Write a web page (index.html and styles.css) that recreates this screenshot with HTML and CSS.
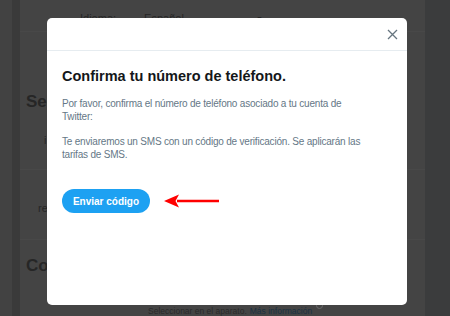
FILE: index.html
```html
<!DOCTYPE html>
<html lang="es">
<head>
  <meta charset="UTF-8" />
  <title>Twitter — Confirma tu número</title>
  <link rel="stylesheet" href="styles.css">
</head>
<body>
<div class="page">
  <div class="gutter"></div>
  <div class="settings">
    <div class="row lang-row">
      <span class="label">Idioma:</span>
      <span class="value">Español</span>
      <span class="caret">▼</span>
    </div>
    <div class="section-title">Seg</div>
    <div class="row small">i</div>
    <div class="row small re">re</div>
    <div class="section-title con">Con</div>
    <div class="row foot">Seleccionar en el aparato. <span class="more">Más información</span><span class="pin"></span></div>
  </div>
  <div class="side"></div>
</div>

<!-- === MODAL === -->
<div class="overlay">
  <div class="modal">
    <div class="modal-header">
      <button class="close-btn" aria-label="Cerrar">
        <svg width="11" height="11" viewBox="0 0 11 11">
          <path d="M1 1 L10 10 M10 1 L1 10" stroke="#66757f" stroke-width="1.3" fill="none"/>
        </svg>
      </button>
    </div>
    <div class="modal-body">
      <h2 class="modal-title">Confirma tu número de teléfono.</h2>
      <p>Por favor, confirma el número de teléfono asociado a tu cuenta de Twitter:</p>
      <p>Te enviaremos un SMS con un código de verificación. Se aplicarán las tarifas de SMS.</p>
      <div class="actions">
        <button class="send-btn">Enviar código</button>
        <svg class="arrow" width="58" height="16" viewBox="0 0 58 16">
          <path d="M14 8 H56" stroke="#f00" stroke-width="2.4"/>
          <path d="M1 8 L16 1.5 L12.5 8 L16 14.5 Z" fill="#f00"/>
        </svg>
      </div>
    </div>
  </div>
</div>
</body>
</html>
```

FILE: styles.css
```css
* {
  box-sizing: border-box;
}

body {
  margin: 0;
  width: 450px;
  height: 316px;
  overflow: hidden;
  font-family: 'Liberation Sans', Arial, sans-serif;
  background-color: #414141;
}

/* ===== Dimmed page behind ===== */
.page {
  display: flex;
  height: 316px;
}

.gutter {
  width: 20px;
  background: linear-gradient(to right, #424242 0 12px, #3a3a3a 12px 20px);
}

.settings {
  width: 405px;
  background-color: #444444;
  color: #262626;
  font-size: 11px;
  display: flex;
  flex-direction: column;
}

.side {
  flex-grow: 1;
  background-color: #3b3c3d;
}

.row {
  border-bottom: 1px solid #484848;
}

.lang-row {
  display: flex;
  align-items: center;
  height: 32px;
  padding: 6px 0 0 60px;
}

.lang-row .value {
  margin-left: 28px;
}

.lang-row .caret {
  margin-left: auto;
  margin-right: 162px;
  font-size: 7px;
}

.section-title {
  font-size: 17px;
  font-weight: bold;
  padding: 60px 0 0 6px;
  height: 90px;
}

.row.small {
  height: 50px;
  padding: 13px 0 0 24px;
}

.row.re {
  height: 70px;
  padding: 32px 0 0 18px;
}

.section-title.con {
  padding-top: 16px;
  height: 55px;
}

.foot {
  display: flex;
  padding: 12px 0 0 128px;
  font-size: 8.5px;
  color: #2a2a2a;
  border-bottom: none;
}

.more {
  margin-left: 3px;
  color: #1b3142;
}

.pin {
  width: 7px;
  height: 7px;
  margin: -4px 0 0 4px;
  border: 1px solid #6a6a6a;
  border-radius: 50%;
}

/* ===== Modal ===== */
.overlay {
  position: absolute;
  top: 18px;
  left: 47px;
}

.modal {
  width: 360px;
  height: 287px;
  background-color: #ffffff;
  border-radius: 5px;
}

.modal-header {
  height: 33px;
  border-bottom: 1px solid #e6ecf0;
  display: flex;
  justify-content: flex-end;
  align-items: center;
  padding-right: 9px;
}

.close-btn {
  background: none;
  border: none;
  padding: 0;
  display: flex;
  cursor: pointer;
}

.modal-body {
  padding: 17px 15px 0 15px;
}

.modal-title {
  margin: 0 0 13px 0;
  font-size: 14.5px;
  font-weight: bold;
  color: #14171a;
}

.modal-body p {
  max-width: 305px;
  margin: 0 0 12px 0;
  font-size: 10px;
  letter-spacing: -0.2px;
  line-height: 13px;
  color: #657786;
}

.actions {
  display: flex;
  align-items: center;
  margin-top: 28px;
}

.send-btn {
  width: 88px;
  height: 24px;
  border: none;
  border-radius: 12px;
  background-color: #1da1f2;
  color: #ffffff;
  font-family: 'Liberation Sans', Arial, sans-serif;
  font-size: 10px;
  font-weight: bold;
  cursor: pointer;
}

.arrow {
  margin-left: 13px;
}
```
